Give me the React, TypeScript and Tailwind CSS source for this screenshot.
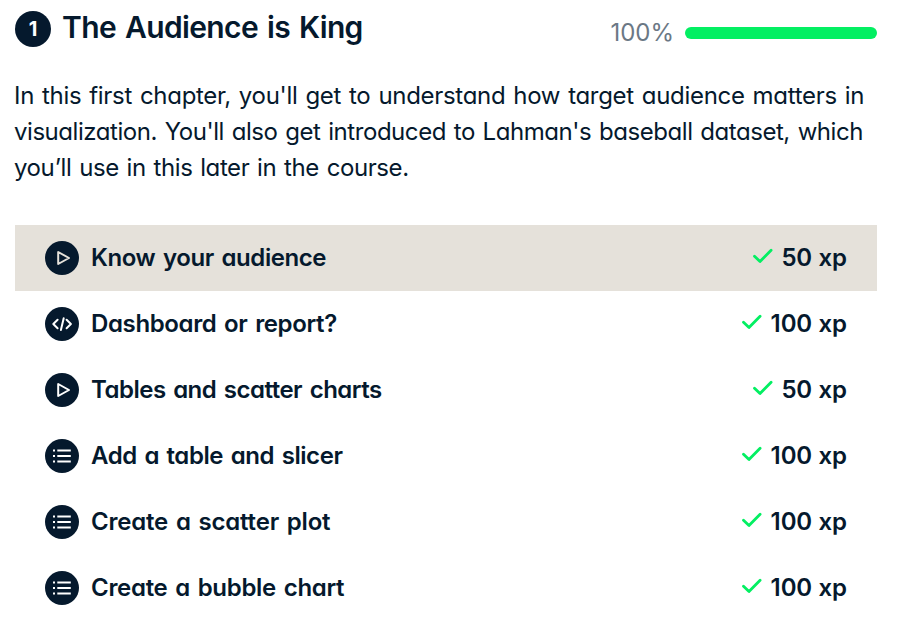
type Kind = 'video' | 'code' | 'list';

interface Exercise {
  kind: Kind;
  title: string;
  xp: number;
  active?: boolean;
  tracking: string;
}

const exercises: Exercise[] = [
  { kind: 'video', title: 'Know your audience', xp: 50, active: true, tracking: 'tracking-[-0.41px]' },
  { kind: 'code', title: 'Dashboard or report?', xp: 100, tracking: 'tracking-[-0.37px]' },
  { kind: 'video', title: 'Tables and scatter charts', xp: 50, tracking: 'tracking-[-0.5px]' },
  { kind: 'list', title: 'Add a table and slicer', xp: 100, tracking: 'tracking-[-0.43px]' },
  { kind: 'list', title: 'Create a scatter plot', xp: 100, tracking: 'tracking-[-0.2px]' },
  { kind: 'list', title: 'Create a bubble chart', xp: 100, tracking: 'tracking-[-0.3px]' },
];

function KindIcon({ kind, active }: { kind: Kind; active?: boolean }) {
  return (
    <svg
      className={`h-[34px] w-[34px] shrink-0 ${active ? 'text-[#e5e1da]' : 'text-white'}`}
      viewBox="0 0 34 34"
      fill="none"
      stroke="currentColor"
      strokeWidth="2"
    >
      <circle cx="17" cy="17" r="17" fill="#05192d" stroke="none" />
      {kind === 'video' && <path d="M13.2 11v12L24 17z" strokeLinejoin="round" />}
      {kind === 'code' && (
        <>
          <path d="M12.6 12.8 8.3 17l4.3 4.2M21.6 12.8l4.3 4.2-4.3 4.2" strokeLinecap="round" strokeLinejoin="round" />
          <path d="M18.7 11.2 15.9 23" strokeLinecap="round" />
        </>
      )}
      {kind === 'list' && (
        <path d="M8 11.5h2M8 17h2M8 22.5h2M12.3 11.5H25.8M12.3 17H25.8M12.3 22.5H25.8" />
      )}
    </svg>
  );
}

function Check() {
  return (
    <svg className="-mt-[4px] h-5 w-5 shrink-0" viewBox="0 0 20 20" fill="none" stroke="#03ef62" strokeWidth="2.8" strokeLinecap="round" strokeLinejoin="round">
      <path d="M1.5 10.2 7 15.6 18.1 4.2" />
    </svg>
  );
}

export default function App() {
  return (
    <main className="h-[630px] w-[900px] overflow-hidden bg-white pl-[15px] pr-[23px] font-[Inter,sans-serif] text-[#05192d] [font-feature-settings:'cv11']">
      <header className="flex h-[57px] items-start justify-between">
        <div className="flex items-start pt-[11px]">
          <span className="flex h-9 w-9 items-center justify-center rounded-full bg-[#05192d] text-[20px] font-bold text-white">1</span>
          <h1 className="ml-[11px] -mt-[2px] whitespace-nowrap text-[30px] leading-9 font-semibold tracking-[-0.63px] [word-spacing:2px]">The Audience is King</h1>
        </div>
        <div className="flex items-center pt-[15px]">
          <span className="text-[24px] leading-9 text-[#6b7885]">100%</span>
          <div className="ml-[11px] h-3 w-48 rounded-full bg-[#03ef62]" />
        </div>
      </header>
      <p className="-ml-px mt-[21px] whitespace-nowrap text-[24px] leading-9 [word-spacing:1.5px]">
        <span className="block tracking-[-0.3px]">In this first chapter, you'll get to understand how target audience matters in</span>
        <span className="block tracking-[-0.45px]">visualization. You'll also get introduced to Lahman's baseball dataset, which</span>
        <span className="block tracking-[-0.42px]">you’ll use in this later in the course.</span>
      </p>
      <ul className="mt-[39px]">
        {exercises.map((e) => (
          <li key={e.title} className={`flex h-[66px] items-center px-[30px] ${e.active ? 'bg-[#e5e1da]' : ''}`}>
            <KindIcon kind={e.kind} active={e.active} />
            <span className={`ml-3 whitespace-nowrap text-[24px] leading-9 font-semibold [word-spacing:2px] ${e.tracking}`}>{e.title}</span>
            <span className={`ml-auto flex items-center text-[24px] leading-9 font-semibold ${e.xp === 50 ? 'gap-2' : 'gap-[9px]'}`}>
              <Check />
              <span className="tracking-[-0.1px] [word-spacing:0.5px]">{e.xp} xp</span>
            </span>
          </li>
        ))}
      </ul>
    </main>
  );
}
